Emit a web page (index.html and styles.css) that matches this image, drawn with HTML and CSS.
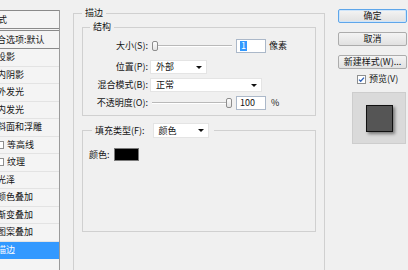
FILE: index.html
```html
<!DOCTYPE html>
<html lang="zh-CN">
<head>
<meta charset="utf-8">
<title>图层样式 - 描边</title>
<link rel="stylesheet" href="styles.css">
</head>
<body>
<div class="dialog">
  <div class="sidebar">
    <div class="sb-inner">
      <div class="sb-head">样式</div>
      <div class="sb-blend">混合选项:默认</div>
      <ul class="fx-list">
        <li class="fx"><span class="cb"></span>投影</li>
        <li class="fx"><span class="cb"></span>内阴影</li>
        <li class="fx"><span class="cb"></span>外发光</li>
        <li class="fx"><span class="cb"></span>内发光</li>
        <li class="fx"><span class="cb"></span>斜面和浮雕</li>
        <li class="fx sub"><span class="cb"></span>等高线</li>
        <li class="fx sub"><span class="cb"></span>纹理</li>
        <li class="fx"><span class="cb"></span>光泽</li>
        <li class="fx"><span class="cb"></span>颜色叠加</li>
        <li class="fx"><span class="cb"></span>渐变叠加</li>
        <li class="fx"><span class="cb"></span>图案叠加</li>
        <li class="fx sel"><span class="cb"></span>描边</li>
      </ul>
    </div>
  </div>

  <fieldset class="grp outer">
    <legend>描边</legend>
    <fieldset class="grp struct">
      <legend>结构</legend>
      <div class="row r1">
        <span class="lbl">大小(S):</span>
        <span class="slider s-left"><span class="thumb"></span><span class="track"></span></span>
        <span class="num"><span class="hl">1</span></span>
        <span class="unit">像素</span>
      </div>
      <div class="row">
        <span class="lbl">位置(P):</span>
        <span class="select w57"><span>外部</span><i class="arrow"></i></span>
      </div>
      <div class="row">
        <span class="lbl">混合模式(B):</span>
        <span class="select w112"><span>正常</span><i class="arrow"></i></span>
      </div>
      <div class="row">
        <span class="lbl">不透明度(O):</span>
        <span class="slider s-right"><span class="track"></span><span class="thumb"></span></span>
        <span class="num">100</span>
        <span class="unit pct">%</span>
      </div>
    </fieldset>
    <fieldset class="grp fill">
      <legend><span class="leg-in"><span>填充类型(F):</span><span class="select w56"><span>颜色</span><i class="arrow"></i></span></span></legend>
      <div class="color-row">
        <span>颜色:</span>
        <span class="swatch"></span>
      </div>
    </fieldset>
  </fieldset>

  <div class="actions">
    <button class="btn default">确定</button>
    <button class="btn">取消</button>
    <button class="btn last">新建样式(W)...</button>
    <label class="pv-check">
      <svg class="chk" width="9" height="9" viewBox="0 0 9 9"><rect x="0.5" y="0.5" width="8" height="8" fill="#fff" stroke="#8e8f8f"/><path d="M2 4.6 L3.7 6.3 L7 2.6" fill="none" stroke="#2b5fb8" stroke-width="1.3"/></svg>
      <span>预览(V)</span>
    </label>
    <div class="preview"><div class="preview-sq"></div></div>
  </div>
</div>
</body>
</html>
```

FILE: styles.css
```css
* { box-sizing: border-box; }
html, body { margin: 0; padding: 0; }
body {
  background: #f0f0f0;
  font: 9px/12px "Noto Sans CJK SC", "Noto Sans", sans-serif;
  color: #141414;
  width: 408px;
  height: 270px;
  overflow: hidden;
}
.dialog { display: flex; align-items: flex-start; height: 270px; overflow: hidden; }

/* sidebar */
.sidebar {
  width: 60px; flex: none; margin-top: 10px; height: 260px;
  border-right: 1px solid #9a9a9a; overflow: hidden; background: #f4f4f4;
}
.sb-inner { margin-left: -18px; width: 77px; }
.sb-head {
  height: 19px; line-height: 17px; padding-left: 7px;
  border-top: 1px solid #8a8a8a; border-bottom: 1px solid #8a8a8a;
}
.sb-blend {
  margin-top: 1px; height: 19px; line-height: 17px; padding-left: 6px;
  border-top: 1px solid #8a8a8a; border-bottom: 1px solid #8a8a8a;
}
.fx-list { list-style: none; margin: 0; padding: 0; }
.fx {
  height: 17.5px; display: flex; align-items: center; padding-left: 4px;
  border-bottom: 1px solid #e3e3e3; white-space: nowrap;
}
.fx.sub { padding-left: 14px; }
.cb { width: 8px; height: 8px; border: 1px solid #8f8f8f; background: #fff; margin-right: 3px; flex: none; }
.fx.sel { background: #3399ff; color: #fff; border-bottom-color: #3399ff; }

/* group boxes */
fieldset { margin: 0; border: 1px solid #d0d0d0; min-width: 0; }
legend { padding: 0 3px; line-height: 12px; }
.outer { margin: 7px 0 0 13px; width: 252px; height: 264px; padding: 2px 8px 0 8px; flex: none; }
.struct { width: 234px; padding: 4px 8px 3px 7px; }
.fill { width: 234px; margin-top: 7px; padding: 10px 8px 70px 6px; }
.fill legend { margin-left: 3px; padding: 0 5px 0 3px; line-height: 15px; }
.leg-in { display: flex; align-items: center; }

.row { display: flex; align-items: center; height: 18px; white-space: nowrap; }
.r1 { margin-bottom: 3px; }
.lbl { width: 58px; margin-right: 2px; text-align: right; flex: none; }

.select {
  display: flex; align-items: center; justify-content: space-between;
  background: #fff; border: 1px solid #e4e4e4; height: 14px; padding: 0 4px 0 5px;
}
.w57 { width: 57px; }
.w112 { width: 112px; }
.w56 { width: 56px; height: 15px; margin-left: 8px; }
.arrow {
  width: 0; height: 0;
  border-left: 3px solid transparent; border-right: 3px solid transparent; border-top: 3px solid #111;
}

.slider { width: 86px; display: flex; align-items: center; height: 12px; }
.s-left { padding: 0 4px 0 2px; }
.s-right { padding: 0 4px 0 2px; }
.track { flex: 1; height: 2px; border-top: 1px solid #b9b9b9; border-bottom: 1px solid #fff; }
.thumb {
  width: 6px; height: 10px; flex: none; border: 1px solid #8d8d8d; border-radius: 2px;
  background: linear-gradient(#fdfdfd, #e4e4e4);
}
.num {
  width: 30px; height: 14px; background: #fff; border: 1px solid #abb8c9;
  display: flex; align-items: center; padding-left: 3px;
}
.hl { background: #3399ff; color: #fff; padding: 0 1px; line-height: 10px; }
.unit { margin-left: 3px; }
.pct { margin-left: 5px; }

.color-row { display: flex; align-items: center; height: 13px; }
.swatch { width: 25px; height: 13px; background: #000; border: 1px solid #7a7a7a; margin-left: 4px; }

/* right column */
.actions { margin-left: 13px; width: 69px; padding-top: 9px; display: flex; flex-direction: column; flex: none; }
.btn {
  height: 14px; margin: 0 0 9px 0; padding: 0; font: inherit; line-height: 12px; color: #141414;
  border: 1px solid #acacac; border-radius: 2px; background: linear-gradient(#f4f4f4, #e1e1e1);
  white-space: nowrap;
}
.btn.default { border-color: #5ea6ea; box-shadow: inset 0 0 0 1px #cfe5fa; }
.btn.last { margin-bottom: 4px; }
.pv-check { display: flex; align-items: center; height: 12px; margin-left: 19px; }
.chk { margin-right: 3px; flex: none; }
.preview {
  margin: 7px 0 0 14px; width: 54px; height: 52px; background: #dadada; border: 1px solid #cdcdcd;
  display: flex; align-items: center; justify-content: center;
}
.preview-sq {
  width: 27px; height: 27px; background: #555; border: 1px solid #111;
  box-shadow: 2px 2px 3px rgba(0,0,0,0.45);
}
```
